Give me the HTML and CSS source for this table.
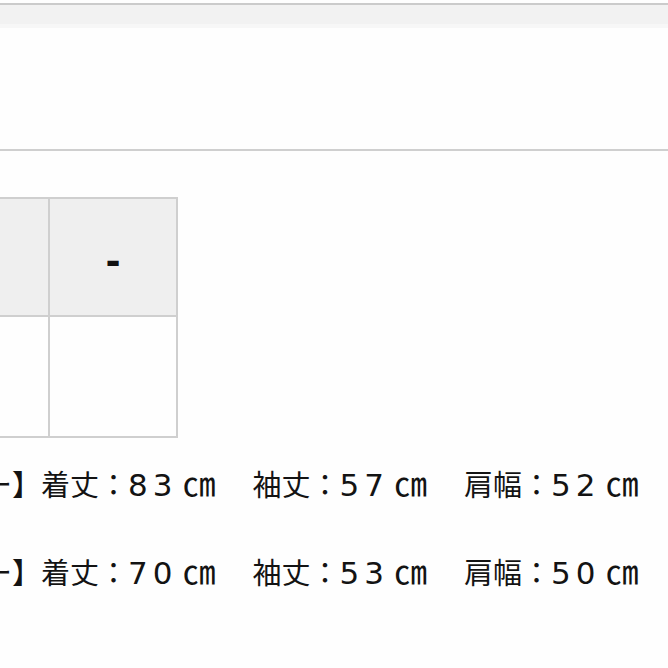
FILE: index.html
```html
<!DOCTYPE html>
<html lang="ja">
<head>
<meta charset="utf-8">
<title>サイズ</title>
<link rel="stylesheet" href="styles.css">
</head>
<body>
<div class="topbar"></div>
<div class="panel"></div>
<div class="content">
  <table class="size-table">
    <tr class="head">
      <td class="c1"></td>
      <td class="c2"><span class="dash">-</span></td>
    </tr>
    <tr class="body-row">
      <td class="c1"></td>
      <td class="c2"></td>
    </tr>
  </table>
  <div class="specs">
    <p class="spec"><span class="label">【フリー】</span><span class="grp">着丈：<span class="num">83</span><span class="unit">㎝</span></span><span class="grp">袖丈：<span class="num">57</span><span class="unit">㎝</span></span><span class="grp">肩幅：<span class="num">52</span><span class="unit">㎝</span></span></p>
    <p class="spec"><span class="label">【フリー】</span><span class="grp">着丈：<span class="num">70</span><span class="unit">㎝</span></span><span class="grp">袖丈：<span class="num">53</span><span class="unit">㎝</span></span><span class="grp">肩幅：<span class="num">50</span><span class="unit">㎝</span></span></p>
  </div>
</div>
</body>
</html>
```
FILE: styles.css
```css
html, body {
  margin: 0;
  padding: 0;
  background: #fefefe;
  overflow: hidden;
}
body {
  width: 668px;
  height: 668px;
  font-family: "Noto Sans CJK JP", "Noto Sans", sans-serif;
  color: #131313;
}
.topbar {
  margin-top: 3px;
  border-top: 2px solid #cbcbcb;
  height: 19px;
  background: #f2f2f2;
  border-bottom: 4px solid #f7f7f7;
}
.panel {
  height: 121px;
  border-bottom: 2px solid #cfcfcf;
}
.content {
  margin-left: -100px;
}
.size-table {
  margin-top: 46px;
  border-collapse: separate;
  border-spacing: 0;
  border-top: 2px solid #cfcfcf;
  border-left: 2px solid #cfcfcf;
}
.size-table td {
  padding: 0;
  border-right: 2px solid #cfcfcf;
  border-bottom: 2px solid #cfcfcf;
}
.size-table .c1 { width: 146px; }
.size-table .c2 { width: 126px; text-align: center; }
.head td {
  height: 116px;
  background: #efefef;
}
.body-row td {
  height: 119px;
  background: #fefefe;
}
.dash {
  font-family: "Liberation Sans", Arial, sans-serif;
  font-weight: bold;
  font-size: 44px;
  line-height: 1;
  color: #111;
  position: relative;
  top: 3px;
}
.specs {
  margin-left: -4px;
  padding-top: 24px;
}
.spec {
  display: flex;
  align-items: baseline;
  margin: 0 0 45px 0;
  font-size: 29px;
  line-height: 40px;
  white-space: nowrap;
}
.grp + .grp {
  margin-left: 37px;
}
.num {
  font-family: "DejaVu Sans", sans-serif;
  font-size: 31px;
  letter-spacing: 5px;
  padding-right: 5px;
}
.unit {
  font-size: 33px;
}
```
